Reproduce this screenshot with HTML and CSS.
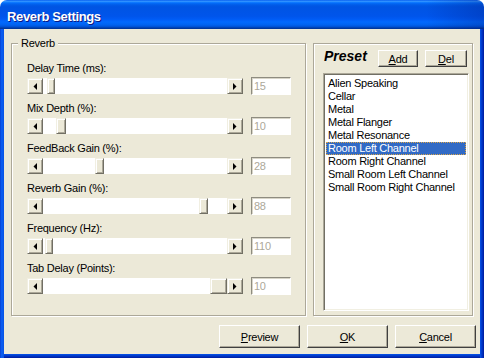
FILE: index.html
```html
<!DOCTYPE html>
<html>
<head>
<meta charset="utf-8">
<link rel="stylesheet" href="styles.css">
</head>
<body>
<div class="window">
  <div class="titlebar"><span class="title">Reverb Settings</span></div>
  <div class="frame">
    <div class="client">
      <div class="main">
        <div class="group">
          <span class="group-title">Reverb</span>

          <div class="field">
            <div class="label">Delay Time (ms):</div>
            <div class="row">
              <div class="hscroll">
                <div class="sbtn"><svg width="4" height="7" viewBox="0 0 4 7"><path d="M4 0V7L0.5 3.5Z"/></svg></div>
                <div class="track"><div class="thumb" style="margin-left:4px;width:8px"></div></div>
                <div class="sbtn"><svg width="4" height="7" viewBox="0 0 4 7"><path d="M0 0V7L3.5 3.5Z"/></svg></div>
              </div>
              <div class="edit">15</div>
            </div>
          </div>

          <div class="field">
            <div class="label">Mix Depth (%):</div>
            <div class="row">
              <div class="hscroll">
                <div class="sbtn"><svg width="4" height="7" viewBox="0 0 4 7"><path d="M4 0V7L0.5 3.5Z"/></svg></div>
                <div class="track"><div class="thumb" style="margin-left:13px;width:10px"></div></div>
                <div class="sbtn"><svg width="4" height="7" viewBox="0 0 4 7"><path d="M0 0V7L3.5 3.5Z"/></svg></div>
              </div>
              <div class="edit">10</div>
            </div>
          </div>

          <div class="field">
            <div class="label">FeedBack Gain (%):</div>
            <div class="row">
              <div class="hscroll">
                <div class="sbtn"><svg width="4" height="7" viewBox="0 0 4 7"><path d="M4 0V7L0.5 3.5Z"/></svg></div>
                <div class="track"><div class="thumb" style="margin-left:52px;width:9px"></div></div>
                <div class="sbtn"><svg width="4" height="7" viewBox="0 0 4 7"><path d="M0 0V7L3.5 3.5Z"/></svg></div>
              </div>
              <div class="edit">28</div>
            </div>
          </div>

          <div class="field">
            <div class="label">Reverb Gain (%):</div>
            <div class="row">
              <div class="hscroll">
                <div class="sbtn"><svg width="4" height="7" viewBox="0 0 4 7"><path d="M4 0V7L0.5 3.5Z"/></svg></div>
                <div class="track"><div class="thumb" style="margin-left:156px;width:9px"></div></div>
                <div class="sbtn"><svg width="4" height="7" viewBox="0 0 4 7"><path d="M0 0V7L3.5 3.5Z"/></svg></div>
              </div>
              <div class="edit">88</div>
            </div>
          </div>

          <div class="field">
            <div class="label">Frequency (Hz):</div>
            <div class="row">
              <div class="hscroll">
                <div class="sbtn"><svg width="4" height="7" viewBox="0 0 4 7"><path d="M4 0V7L0.5 3.5Z"/></svg></div>
                <div class="track"><div class="thumb" style="margin-left:2px;width:8px"></div></div>
                <div class="sbtn"><svg width="4" height="7" viewBox="0 0 4 7"><path d="M0 0V7L3.5 3.5Z"/></svg></div>
              </div>
              <div class="edit">110</div>
            </div>
          </div>

          <div class="field">
            <div class="label">Tab Delay (Points):</div>
            <div class="row">
              <div class="hscroll">
                <div class="sbtn"><svg width="4" height="7" viewBox="0 0 4 7"><path d="M4 0V7L0.5 3.5Z"/></svg></div>
                <div class="track"><div class="thumb" style="margin-left:167px;width:17px"></div></div>
                <div class="sbtn"><svg width="4" height="7" viewBox="0 0 4 7"><path d="M0 0V7L3.5 3.5Z"/></svg></div>
              </div>
              <div class="edit">10</div>
            </div>
          </div>
        </div>

        <div class="preset-panel">
          <div class="preset-head">
            <span class="preset-label">Preset</span>
            <button class="btn btn-small btn-add"><u>A</u>dd</button>
            <button class="btn btn-small btn-del"><u>D</u>el</button>
          </div>
          <div class="listbox">
            <div class="item">Alien Speaking</div>
            <div class="item">Cellar</div>
            <div class="item">Metal</div>
            <div class="item">Metal Flanger</div>
            <div class="item">Metal Resonance</div>
            <div class="item selected">Room Left Channel</div>
            <div class="item">Room Right Channel</div>
            <div class="item">Small Room Left Channel</div>
            <div class="item">Small Room Right Channel</div>
          </div>
        </div>
      </div>

      <div class="buttons">
        <button class="btn btn-large"><u>P</u>review</button>
        <button class="btn btn-large"><u>O</u>K</button>
        <button class="btn btn-large"><u>C</u>ancel</button>
      </div>
    </div>
  </div>
</div>
</body>
</html>
```

FILE: styles.css
```css
html, body {
  margin: 0;
  padding: 0;
  background: #ffffff;
}

.window {
  width: 484px;
  height: 358px;
  display: flex;
  flex-direction: column;
  border-radius: 7px 7px 0 0;
  overflow: hidden;
  font-family: "Liberation Sans", Arial, sans-serif;
  font-size: 11px;
  letter-spacing: -0.25px;
  color: #000;
}

.titlebar {
  height: 29px;
  box-sizing: border-box;
  padding: 4px 0 0 7px;
  line-height: 25px;
  background:
    linear-gradient(to right, rgba(0, 20, 120, 0) 88%, rgba(0, 20, 120, 0.28) 100%),
    linear-gradient(to bottom, #0058ee 0%, #3593ff 4%, #288eff 6%, #127dff 8%, #036ffc 10%, #0262ee 14%, #0057e5 20%, #0054e3 24%, #0055eb 56%, #005bf5 66%, #026afe 76%, #0062ef 86%, #0052d6 92%, #0040ab 96%, #003092 100%);
}

.title {
  font-family: "Liberation Sans", Arial, sans-serif;
  font-weight: bold;
  font-size: 13px;
  letter-spacing: -0.35px;
  color: #fff;
  text-shadow: 1px 1px 0 #0a1883;
}

.frame {
  flex: 1;
  display: flex;
  padding: 0 4px 4px 4px;
  background:
    linear-gradient(to right, #0836c8 0px, #0a5cf0 1px, #0b5bee 3px, #0650e2 4px) left top / 4px 100% no-repeat,
    linear-gradient(to left, #001c98 0px, #0028b4 1px, #0044d8 3px, #0a54e8 4px) right top / 4px 100% no-repeat,
    linear-gradient(to top, #001c98 0px, #0028b4 1px, #0044d8 3px, #0a54e8 4px) left bottom / 100% 4px no-repeat,
    #0650e2;
}

.client {
  flex: 1;
  background: #ece9d8;
  padding: 14px 4px 6px 7px;
  display: flex;
  flex-direction: column;
}

.main {
  display: flex;
  gap: 7px;
  height: 273px;
}

.group {
  position: relative;
  box-sizing: border-box;
  width: 295px;
  height: 273px;
  border: 1px solid #aca899;
  box-shadow: inset 1px 1px 0 #fff, 1px 1px 0 #fff;
  padding: 18px 0 0 15px;
}

.group-title {
  position: absolute;
  top: -7px;
  left: 6px;
  padding: 0 3px;
  line-height: 13px;
  background: #ece9d8;
}

.field {
  margin-bottom: 7px;
}

.label {
  line-height: 13px;
  height: 13px;
  margin-bottom: 2px;
  white-space: nowrap;
}

.row {
  display: flex;
  align-items: center;
  gap: 8px;
  height: 18px;
}

.hscroll {
  display: flex;
  width: 216px;
  height: 16px;
}

.sbtn {
  box-sizing: border-box;
  width: 16px;
  height: 16px;
  background: #ece9d8;
  border: 1px solid;
  border-color: #f1efe2 #716f64 #716f64 #f1efe2;
  box-shadow: inset 1px 1px 0 #fff, inset -1px -1px 0 #aca899;
  display: flex;
  align-items: center;
  justify-content: center;
}

.sbtn svg {
  display: block;
  fill: #000;
}

.track {
  flex: 1;
  display: flex;
  background: #fff;
}

.thumb {
  box-sizing: border-box;
  height: 16px;
  background: #ece9d8;
  border: 1px solid;
  border-color: #f1efe2 #716f64 #716f64 #f1efe2;
  box-shadow: inset 1px 1px 0 #fff, inset -1px -1px 0 #aca899;
}

.edit {
  box-sizing: border-box;
  width: 40px;
  height: 18px;
  border: 1px solid;
  border-color: #8e8c80 #fff #fff #8e8c80;
  box-shadow: inset 1px 1px 0 #d8d5c8;
  background: #fff;
  color: #aca899;
  padding-left: 2px;
  line-height: 16px;
}

.preset-panel {
  box-sizing: border-box;
  width: 160px;
  height: 273px;
  border: 1px solid #aca899;
  box-shadow: inset 1px 1px 0 #fff, 1px 1px 0 #fff;
  padding: 6px 0 0 9px;
}

.preset-head {
  display: flex;
  height: 17px;
}

.preset-label {
  align-self: flex-start;
  width: 55px;
  box-sizing: border-box;
  padding-left: 1px;
  font-weight: bold;
  font-style: italic;
  font-size: 14px;
  line-height: 13px;
  letter-spacing: 0;
}

.btn {
  box-sizing: border-box;
  margin: 0;
  padding: 0;
  background: #ece9d8;
  border: 1px solid;
  border-color: #fff #404040 #404040 #fff;
  box-shadow: inset -1px -1px 0 #aca899;
  font-family: "Liberation Sans", Arial, sans-serif;
  font-size: 11px;
  letter-spacing: -0.25px;
  color: #000;
  text-align: center;
}

.btn-small {
  height: 17px;
  line-height: 14px;
}

.btn-add {
  width: 40px;
}

.btn-del {
  width: 42px;
  margin-left: 7px;
}

.listbox {
  box-sizing: border-box;
  width: 146px;
  height: 238px;
  margin-top: 6px;
  border: 1px solid;
  border-color: #aca899 #fff #fff #aca899;
  box-shadow: inset 1px 1px 0 #716f64, inset -1px -1px 0 #f1efe2;
  background: #fff;
  padding: 3px 2px 0 2px;
}

.item {
  height: 13px;
  line-height: 13px;
  padding-left: 2px;
  white-space: nowrap;
}

.item.selected {
  background: #316ac5;
  color: #fff;
  outline: 1px dotted #d9a54a;
  outline-offset: -1px;
}

.buttons {
  display: flex;
  justify-content: flex-end;
  gap: 7px;
  margin-top: 9px;
}

.btn-large {
  width: 81px;
  height: 23px;
  line-height: 20px;
}
```
